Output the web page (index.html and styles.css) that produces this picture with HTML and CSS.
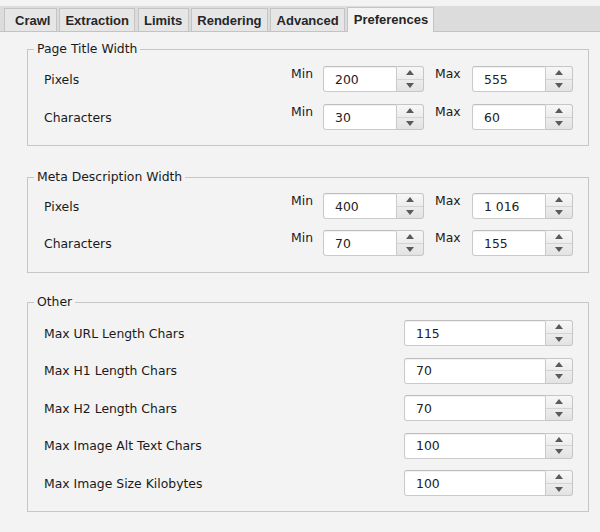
FILE: index.html
```html
<!DOCTYPE html>
<html>
<head>
<meta charset="utf-8">
<link rel="stylesheet" href="styles.css">
</head>
<body>
<div class="tabs">
  <div class="tab first">Crawl</div>
  <div class="tab">Extraction</div>
  <div class="tab">Limits</div>
  <div class="tab">Rendering</div>
  <div class="tab">Advanced</div>
  <div class="tab active">Preferences</div>
</div>
<div class="panel">
  <fieldset class="group g1">
    <legend>Page Title Width</legend>
    <div class="row pair">
      <span class="lbl">Pixels</span>
      <span class="mm">Min</span>
      <div class="spin"><div class="val">200</div><div class="arrows"><span class="up"></span><span class="down"></span></div></div>
      <span class="mm">Max</span>
      <div class="spin"><div class="val">555</div><div class="arrows"><span class="up"></span><span class="down"></span></div></div>
    </div>
    <div class="row pair">
      <span class="lbl">Characters</span>
      <span class="mm">Min</span>
      <div class="spin"><div class="val">30</div><div class="arrows"><span class="up"></span><span class="down"></span></div></div>
      <span class="mm">Max</span>
      <div class="spin"><div class="val">60</div><div class="arrows"><span class="up"></span><span class="down"></span></div></div>
    </div>
  </fieldset>
  <fieldset class="group g2">
    <legend>Meta Description Width</legend>
    <div class="row pair">
      <span class="lbl">Pixels</span>
      <span class="mm">Min</span>
      <div class="spin"><div class="val">400</div><div class="arrows"><span class="up"></span><span class="down"></span></div></div>
      <span class="mm">Max</span>
      <div class="spin"><div class="val">1 016</div><div class="arrows"><span class="up"></span><span class="down"></span></div></div>
    </div>
    <div class="row pair">
      <span class="lbl">Characters</span>
      <span class="mm">Min</span>
      <div class="spin"><div class="val">70</div><div class="arrows"><span class="up"></span><span class="down"></span></div></div>
      <span class="mm">Max</span>
      <div class="spin"><div class="val">155</div><div class="arrows"><span class="up"></span><span class="down"></span></div></div>
    </div>
  </fieldset>
  <fieldset class="group g3">
    <legend>Other</legend>
    <div class="row single">
      <span class="lbl">Max URL Length Chars</span>
      <div class="spin wide"><div class="val">115</div><div class="arrows"><span class="up"></span><span class="down"></span></div></div>
    </div>
    <div class="row single">
      <span class="lbl">Max H1 Length Chars</span>
      <div class="spin wide"><div class="val">70</div><div class="arrows"><span class="up"></span><span class="down"></span></div></div>
    </div>
    <div class="row single">
      <span class="lbl">Max H2 Length Chars</span>
      <div class="spin wide"><div class="val">70</div><div class="arrows"><span class="up"></span><span class="down"></span></div></div>
    </div>
    <div class="row single">
      <span class="lbl">Max Image Alt Text Chars</span>
      <div class="spin wide"><div class="val">100</div><div class="arrows"><span class="up"></span><span class="down"></span></div></div>
    </div>
    <div class="row single">
      <span class="lbl">Max Image Size Kilobytes</span>
      <div class="spin wide"><div class="val">100</div><div class="arrows"><span class="up"></span><span class="down"></span></div></div>
    </div>
  </fieldset>
</div>
</body>
</html>
```
FILE: styles.css
```css
html, body {
  margin: 0;
  padding: 0;
  background: #f3f3f3;
}
body {
  width: 600px;
  height: 532px;
  overflow: hidden;
  font-family: "DejaVu Sans", "Liberation Sans", sans-serif;
  font-size: 12.4px;
  color: #1a1a1a;
}
.tabs {
  margin-top: 6px;
  height: 26px;
  box-sizing: border-box;
  background: #dcdcdc;
  border-bottom: 1px solid #c3c3c3;
  display: flex;
  align-items: flex-end;
  gap: 2.5px;
  padding-left: 4px;
}
.tab {
  height: 23px;
  box-sizing: border-box;
  padding: 0 5.25px;
  border: 1px solid #c4c4c4;
  border-bottom: none;
  background: #e6e6e6;
  font-family: "Liberation Sans", Arial, sans-serif;
  font-weight: bold;
  font-size: 13px;
  color: #262626;
  display: flex;
  align-items: center;
}
.tab.first {
  padding-left: 10px;
}
.tab.active {
  height: 25px;
  margin-bottom: -1px;
  background: #f3f3f3;
  border-color: #b3d88c;
  padding-bottom: 1px;
}
.panel {
  padding: 0 11px 0 27px;
}
.group {
  margin: 0;
  border: 1px solid #c6c6c6;
  padding: 9px 15px 15px 16px;
  display: flex;
  flex-direction: column;
  gap: 12px;
  min-width: 0;
}
.group legend {
  margin-left: -10px;
  padding: 0 3px;
  line-height: 16px;
  font-size: 12.4px;
  color: #1a1a1a;
}
.g1 { margin-top: 9px; }
.g2 { margin-top: 23px; gap: 11px; padding-top: 8px; padding-bottom: 16px; }
.g3 { margin-top: 21px; gap: 11.5px; padding-top: 10px; }
.row {
  height: 26px;
  display: flex;
  align-items: center;
}
.lbl {
  flex: 1;
}
.mm {
  align-self: flex-start;
  line-height: 16px;
}
.pair .mm:nth-of-type(2) {
  width: 32px;
}
.pair .mm:nth-of-type(3) {
  width: 37px;
  margin-left: 11px;
}
.spin {
  display: flex;
  width: 101px;
  height: 26px;
}
.spin.wide {
  width: 169px;
}
.val {
  flex: 1;
  background: #ffffff;
  border: 1px solid #cacaca;
  border-top-color: #bdbdbd;
  border-radius: 3px 0 0 3px;
  padding-left: 11px;
  display: flex;
  align-items: center;
  box-shadow: inset 0 1px 1px rgba(0,0,0,0.06);
  color: #222;
}
.arrows {
  width: 27px;
  box-sizing: border-box;
  border: 1px solid #c6c6c6;
  border-left: none;
  border-radius: 0 3px 3px 0;
  background: linear-gradient(#f7f7f7, #e3e3e3);
  display: flex;
  flex-direction: column;
}
.up, .down {
  flex: 1;
  display: flex;
  align-items: center;
  justify-content: center;
}
.up {
  border-bottom: 1px solid #d4d4d4;
}
.up::before {
  content: "";
  border-left: 4px solid transparent;
  border-right: 4px solid transparent;
  border-bottom: 5px solid #5a5a5a;
}
.down::before {
  content: "";
  border-left: 4px solid transparent;
  border-right: 4px solid transparent;
  border-top: 5px solid #5a5a5a;
}
```
